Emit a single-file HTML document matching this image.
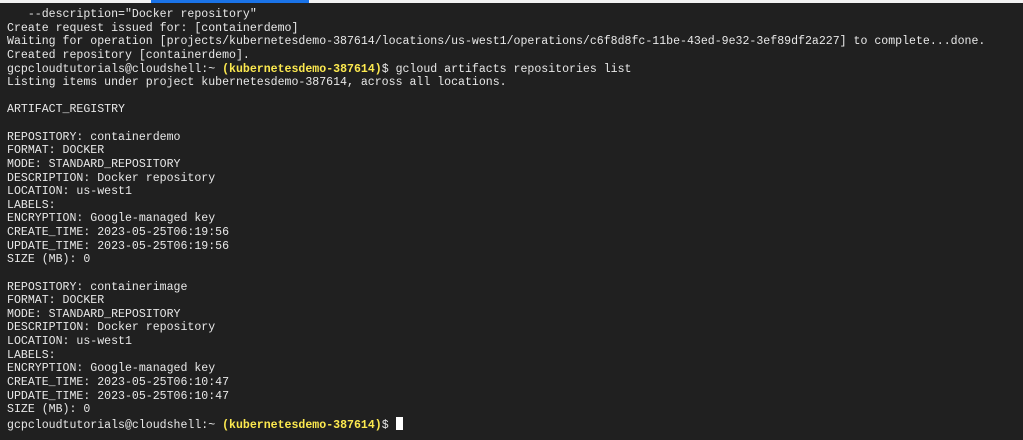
<!DOCTYPE html>
<html><head><style>
html,body{margin:0;padding:0;width:1023px;height:440px;overflow:hidden;background:#202020;}
.top{position:absolute;left:0;top:0;width:1023px;height:3px;background:#f1f1f1;}
.blue{position:absolute;left:151px;top:0;width:158px;height:3px;background:#1a73e8;}
pre{position:absolute;left:7px;top:8px;margin:0;font-family:"Liberation Mono",monospace;font-size:11.57px;line-height:13.63px;color:#e8e8e8;}
.y{color:#fce94f;font-weight:bold;}
.c{display:inline-block;width:7px;height:13px;background:#fff;vertical-align:-2px;}
</style></head><body>
<div class="top"></div><div class="blue"></div>
<pre>   --description="Docker repository"
Create request issued for: [containerdemo]
Waiting for operation [projects/kubernetesdemo-387614/locations/us-west1/operations/c6f8d8fc-11be-43ed-9e32-3ef89df2a227] to complete...done.
Created repository [containerdemo].
gcpcloudtutorials@cloudshell:~ <span class="y">(kubernetesdemo-387614)</span>$ gcloud artifacts repositories list
Listing items under project kubernetesdemo-387614, across all locations.

ARTIFACT_REGISTRY

REPOSITORY: containerdemo
FORMAT: DOCKER
MODE: STANDARD_REPOSITORY
DESCRIPTION: Docker repository
LOCATION: us-west1
LABELS:
ENCRYPTION: Google-managed key
CREATE_TIME: 2023-05-25T06:19:56
UPDATE_TIME: 2023-05-25T06:19:56
SIZE (MB): 0

REPOSITORY: containerimage
FORMAT: DOCKER
MODE: STANDARD_REPOSITORY
DESCRIPTION: Docker repository
LOCATION: us-west1
LABELS:
ENCRYPTION: Google-managed key
CREATE_TIME: 2023-05-25T06:10:47
UPDATE_TIME: 2023-05-25T06:10:47
SIZE (MB): 0
gcpcloudtutorials@cloudshell:~ <span class="y">(kubernetesdemo-387614)</span>$ <span class="c"></span></pre>
</body></html>
